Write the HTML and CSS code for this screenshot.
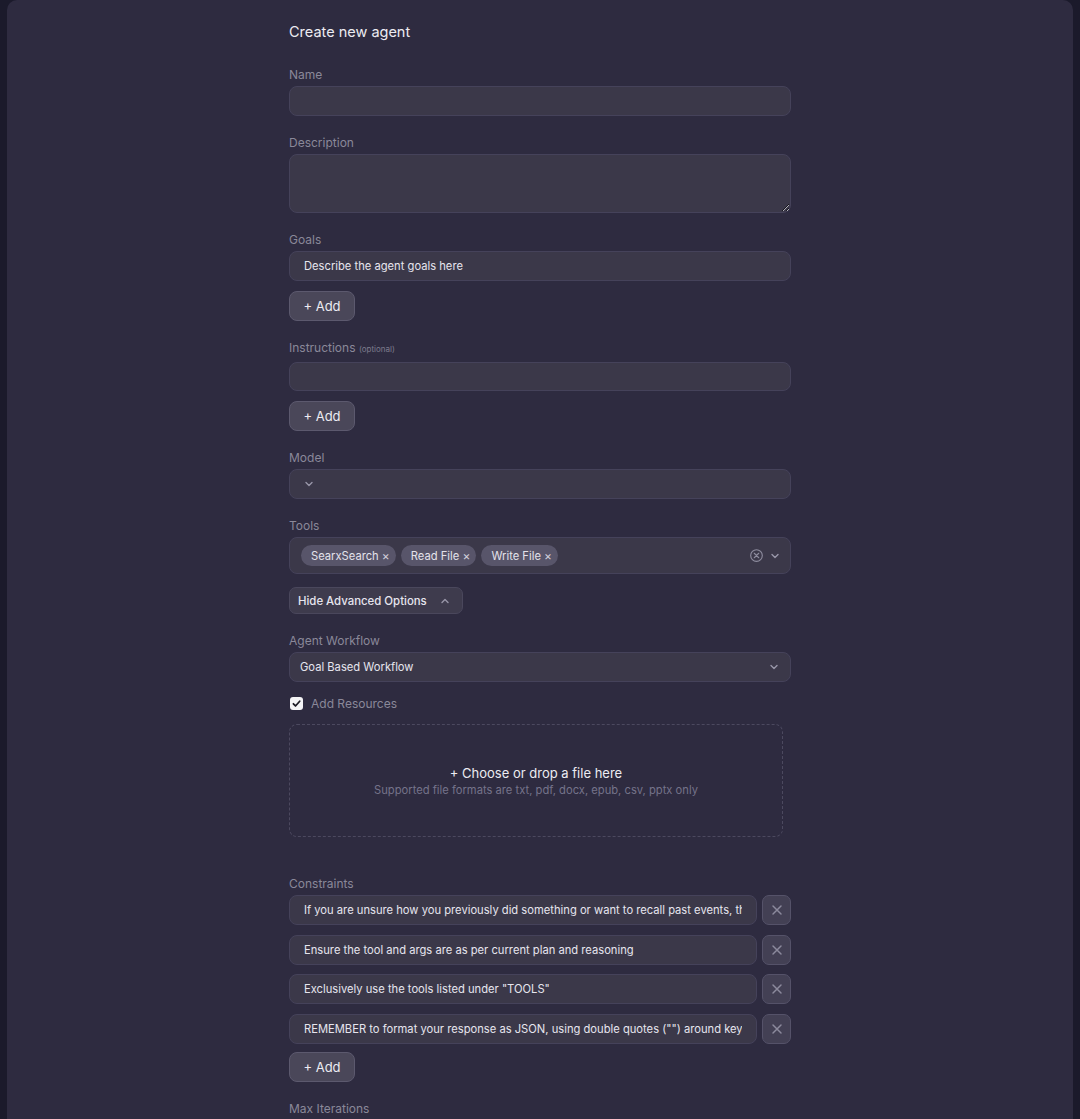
FILE: index.html
```html
<!DOCTYPE html>
<html lang="en">
<head>
  <meta charset="UTF-8" />
  <meta name="viewport" content="width=device-width, initial-scale=1.0" />
  <title>Create new agent</title>
  <link rel="stylesheet" href="styles.css">
</head>
<body>
  <div class="panel">
    <form class="agent-form">
      <h1 class="title">Create new agent</h1>

      <div class="field">
        <label class="label">Name</label>
        <input class="input" type="text">
      </div>

      <div class="field">
        <label class="label">Description</label>
        <textarea class="input textarea"></textarea>
      </div>

      <div class="field">
        <label class="label">Goals</label>
        <input class="input" type="text" value="Describe the agent goals here">
        <button type="button" class="add-btn">+ Add</button>
      </div>

      <div class="field">
        <label class="label">Instructions <span class="optional">(optional)</span></label>
        <input class="input input-tall" type="text">
        <button type="button" class="add-btn">+ Add</button>
      </div>

      <div class="field">
        <label class="label">Model</label>
        <div class="input select select-left">
          <svg class="chev" viewBox="0 0 12 12"><path d="M3 4.5l3 3 3-3"/></svg>
        </div>
      </div>

      <div class="field">
        <label class="label">Tools</label>
        <div class="input tools">
          <div class="chips">
            <span class="chip">SearxSearch <span class="x">×</span></span>
            <span class="chip">Read File <span class="x">×</span></span>
            <span class="chip">Write File <span class="x">×</span></span>
          </div>
          <div class="tool-icons">
            <svg class="clear" viewBox="0 0 16 16"><circle cx="8" cy="8" r="6.2"/><path d="M5.6 5.6l4.8 4.8M10.4 5.6l-4.8 4.8"/></svg>
            <svg class="chev" viewBox="0 0 12 12"><path d="M3 4.5l3 3 3-3"/></svg>
          </div>
        </div>
        <button type="button" class="adv-btn">Hide Advanced Options
          <svg class="chev" viewBox="0 0 12 12"><path d="M3 7.5l3-3 3 3"/></svg>
        </button>
      </div>

      <div class="field">
        <label class="label">Agent Workflow</label>
        <div class="input select">
          <span>Goal Based Workflow</span>
          <svg class="chev" viewBox="0 0 12 12"><path d="M3 4.5l3 3 3-3"/></svg>
        </div>
        <label class="check-row">
          <span class="checkbox"><svg viewBox="0 0 12 12"><path d="M2.6 6.3l2.3 2.4 4.6-5.2"/></svg></span>
          Add Resources
        </label>
        <div class="dropzone">
          <div class="drop-title">+ Choose or drop a file here</div>
          <div class="drop-sub">Supported file formats are txt, pdf, docx, epub, csv, pptx only</div>
        </div>
      </div>

      <div class="field constraints">
        <label class="label">Constraints</label>
        <div class="row">
          <input class="input" type="text" value="If you are unsure how you previously did something or want to recall past events, thinking about similar events will help you remember.">
          <button type="button" class="del-btn"><svg viewBox="0 0 14 14"><path d="M3.5 3.5l7 7M10.5 3.5l-7 7"/></svg></button>
        </div>
        <div class="row">
          <input class="input" type="text" value="Ensure the tool and args are as per current plan and reasoning">
          <button type="button" class="del-btn"><svg viewBox="0 0 14 14"><path d="M3.5 3.5l7 7M10.5 3.5l-7 7"/></svg></button>
        </div>
        <div class="row">
          <input class="input" type="text" value='Exclusively use the tools listed under "TOOLS"'>
          <button type="button" class="del-btn"><svg viewBox="0 0 14 14"><path d="M3.5 3.5l7 7M10.5 3.5l-7 7"/></svg></button>
        </div>
        <div class="row">
          <input class="input" type="text" value='REMEMBER to format your response as JSON, using double quotes ("") around keys and string values'>
          <button type="button" class="del-btn"><svg viewBox="0 0 14 14"><path d="M3.5 3.5l7 7M10.5 3.5l-7 7"/></svg></button>
        </div>
        <button type="button" class="add-btn">+ Add</button>
      </div>

      <div class="field">
        <label class="label">Max Iterations</label>
      </div>
    </form>
  </div>
</body>
</html>
```

FILE: styles.css
```css
body {
  margin: 0;
  background: #1b1a2b;
  font-family: Inter, 'Noto Sans', sans-serif;
  color: #e4e3ec;
  height: 1119px;
  overflow: hidden;
}
.panel {
  margin: 0 7px;
  min-height: 1119px;
  background: #2e2b40;
  border-radius: 10px 10px 0 0;
}
.agent-form {
  width: 502px;
  margin: 0 auto;
  padding-top: 23px;
}
.title {
  margin: 0 0 26px;
  font-size: 14.5px;
  font-weight: 400;
  line-height: 18px;
  color: #ecebf2;
}
.field {
  display: flex;
  flex-direction: column;
  margin-bottom: 19px;
}
.label {
  font-size: 12px;
  line-height: 16px;
  color: #8a8899;
  margin-bottom: 3px;
}
.optional {
  font-size: 8px;
  color: #7d7b8d;
}
.input {
  box-sizing: border-box;
  height: 30px;
  width: 100%;
  background: #3b3849;
  border: 1px solid #45425a;
  border-radius: 8px;
  color: #e6e5ee;
  font-family: inherit;
  font-size: 11.2px;
  padding: 0 14px;
  outline: none;
}
.input-tall {
  margin-top: 2px;
  height: 29px;
}
.textarea {
  height: 59px;
  resize: vertical;
  padding: 8px 14px;
}
.add-btn {
  align-self: flex-start;
  margin-top: 10px;
  height: 30px;
  width: 66px;
  background: #4a4759;
  border: 1px solid #5c596e;
  border-radius: 8px;
  color: #ecebf2;
  font-family: inherit;
  font-size: 13px;
  padding: 0;
}
.select {
  display: flex;
  align-items: center;
  justify-content: space-between;
  padding: 0 10px;
}
.select-left {
  justify-content: flex-start;
  padding-left: 13px;
}
.chev {
  width: 12px;
  height: 12px;
  fill: none;
  stroke: #9896a8;
  stroke-width: 1.4;
  stroke-linecap: round;
  stroke-linejoin: round;
}
.tools {
  height: 37px;
  display: flex;
  align-items: center;
  justify-content: space-between;
  padding: 0 9px 0 11px;
}
.chips {
  display: flex;
  gap: 5px;
}
.chip {
  background: #58556a;
  border-radius: 11px;
  height: 21px;
  line-height: 21px;
  padding: 0 6px 0 10px;
  font-size: 11.2px;
  color: #e3e2ea;
}
.chip .x {
  font-size: 12px;
  color: #d0cfda;
}
.tool-icons {
  display: flex;
  align-items: center;
  gap: 5px;
}
.clear {
  width: 15px;
  height: 15px;
  fill: none;
  stroke: #8e8c9e;
  stroke-width: 1.2;
  stroke-linecap: round;
}
.adv-btn {
  align-self: flex-start;
  margin-top: 13px;
  height: 27px;
  display: flex;
  align-items: center;
  gap: 12px;
  background: #3e3b4d;
  border: 1px solid #4a475c;
  border-radius: 7px;
  padding: 0 11px 0 8px;
  color: #e6e5ee;
  font-family: inherit;
  font-size: 11.4px;
  font-weight: 500;
}
.check-row {
  display: flex;
  align-items: center;
  gap: 8px;
  margin-top: 14px;
  font-size: 12px;
  color: #8a8899;
  height: 14px;
}
.checkbox {
  width: 13px;
  height: 13px;
  margin-left: 1px;
  background: #f4f4f6;
  border-radius: 3px;
  display: flex;
  align-items: center;
  justify-content: center;
}
.checkbox svg {
  width: 11px;
  height: 11px;
  fill: none;
  stroke: #1c1b24;
  stroke-width: 1.9;
  stroke-linecap: round;
  stroke-linejoin: round;
}
.dropzone {
  box-sizing: border-box;
  margin-top: 14px;
  width: 494px;
  height: 113px;
  border: 1px dashed #4c495f;
  border-radius: 8px;
  display: flex;
  flex-direction: column;
  align-items: center;
  justify-content: center;
  gap: 2px;
}
.drop-title {
  font-size: 13px;
  color: #ecebf2;
}
.drop-sub {
  font-size: 11.2px;
  color: #75738a;
}
.constraints {
  margin-top: 39px;
}
.row {
  display: flex;
  gap: 5px;
  margin-bottom: 9.5px;
}
.row .input {
  flex: 1;
  text-overflow: clip;
}
.del-btn {
  box-sizing: border-box;
  width: 29px;
  height: 30px;
  flex-shrink: 0;
  background: #434054;
  border: 1px solid #555269;
  border-radius: 7px;
  padding: 0;
  display: flex;
  align-items: center;
  justify-content: center;
}
.del-btn svg {
  width: 16px;
  height: 16px;
  fill: none;
  stroke: #8c8a9d;
  stroke-width: 1.3;
  stroke-linecap: round;
}
.constraints .add-btn {
  margin-top: -1px;
}
```
